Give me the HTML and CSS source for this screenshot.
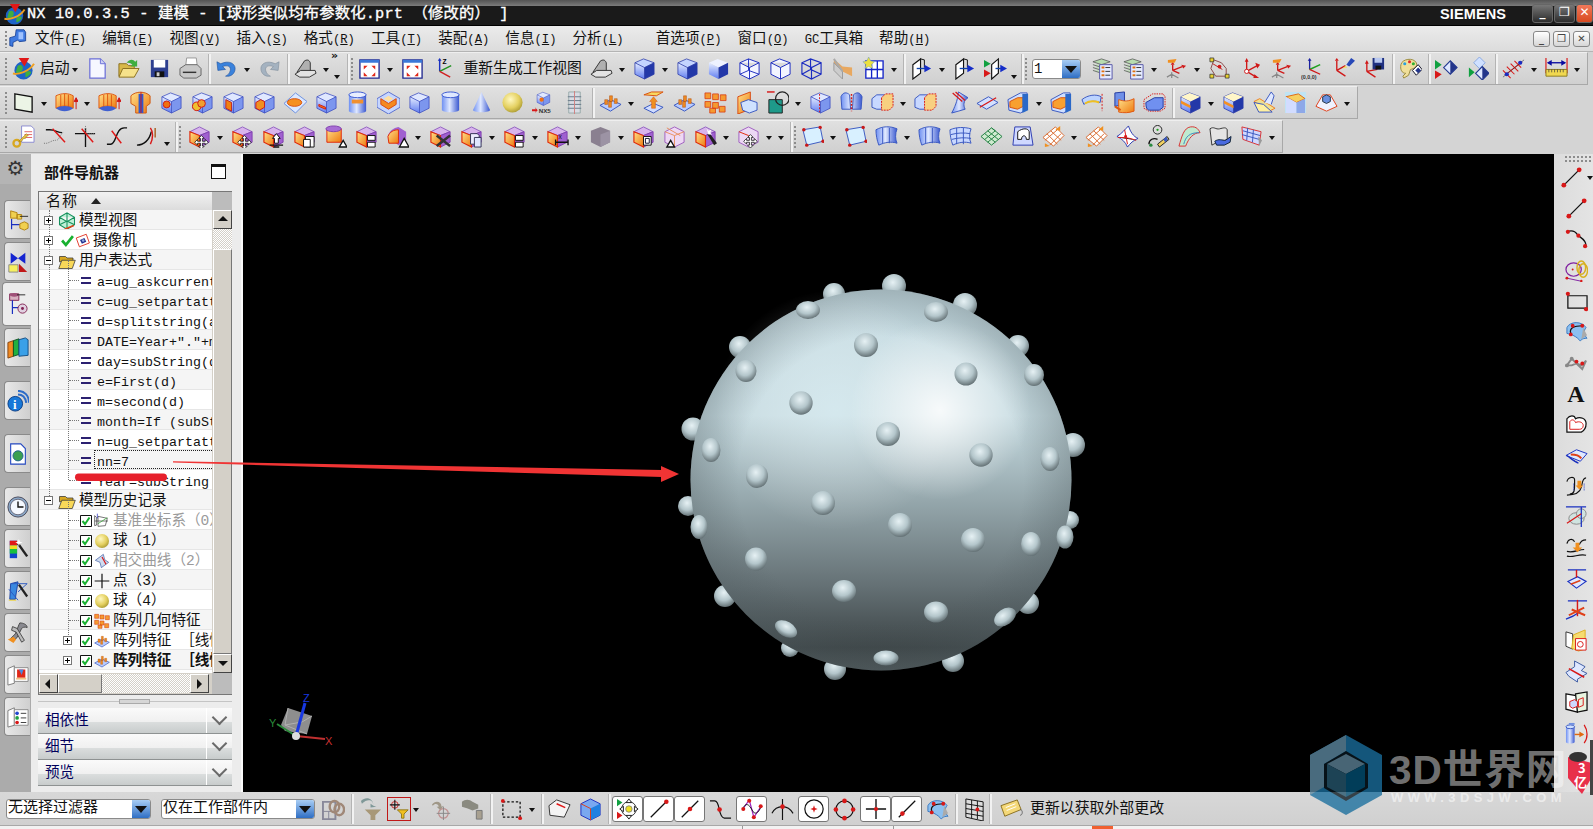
FILE: index.html
```html
<!DOCTYPE html>
<html lang="zh-CN">
<head>
<meta charset="utf-8">
<title>NX 10.0.3.5</title>
<link rel="stylesheet" href="styles.css">
</head>
<body>
<svg class="defs" aria-hidden="true">
<defs>
<linearGradient id="gb" x1="0" y1="0" x2="0" y2="1"><stop offset="0" stop-color="#e6edff"/><stop offset="1" stop-color="#5f7cf0"/></linearGradient>
<linearGradient id="go" x1="0" y1="0" x2="1" y2="1"><stop offset="0" stop-color="#ffe08a"/><stop offset="1" stop-color="#ee7a10"/></linearGradient>
<linearGradient id="gc" x1="0" y1="0" x2="1" y2="0"><stop offset="0" stop-color="#6f90f2"/><stop offset=".45" stop-color="#dfe8ff"/><stop offset="1" stop-color="#3a58d0"/></linearGradient>
<radialGradient id="gy" cx=".4" cy=".35" r=".7"><stop offset="0" stop-color="#fff8c0"/><stop offset=".6" stop-color="#e4d060"/><stop offset="1" stop-color="#a89830"/></radialGradient>
<linearGradient id="gs" x1="0" y1="0" x2="0" y2="1"><stop offset="0" stop-color="#c6dce3"/><stop offset=".33" stop-color="#c6dbe1"/><stop offset=".55" stop-color="#96a8ad"/><stop offset=".78" stop-color="#647074"/><stop offset=".94" stop-color="#3d4547"/><stop offset="1" stop-color="#4a5355"/></linearGradient>
<radialGradient id="gh1"><stop offset="0" stop-color="#fff" stop-opacity=".85"/><stop offset="1" stop-color="#fff" stop-opacity="0"/></radialGradient>
<radialGradient id="gh2"><stop offset="0" stop-color="#e8faff" stop-opacity=".42"/><stop offset="1" stop-color="#fff" stop-opacity="0"/></radialGradient>
<radialGradient id="ge"><stop offset=".75" stop-color="#505c60" stop-opacity="0"/><stop offset="1" stop-color="#505c60" stop-opacity=".32"/></radialGradient>
<radialGradient id="bp" cx=".45" cy=".35" r=".72"><stop offset="0" stop-color="#e6f1f4"/><stop offset=".5" stop-color="#b4c6cb"/><stop offset=".85" stop-color="#6f7d81"/><stop offset="1" stop-color="#505c60"/></radialGradient>

<symbol id="lg" viewBox="0 0 24 24"><circle cx="12" cy="14" r="9.5" fill="#1d63c8"/><path d="M6 9c4-2 6 1 5 4s-5 5-7 3zM14 16c3-2 6-1 6 0s-3 5-6 5z" fill="#3fae3f"/><path d="M1 17C6 19 18 15 23 7" fill="none" stroke="#f0a020" stroke-width="2"/><path d="M7 1h11l-5 9z" fill="#e01818"/></symbol>
<symbol id="br" viewBox="0 0 24 24"><path d="M9 1h10l2 3v11l-8 1-2-2-6 3v5l-4-1V11l7-2z" fill="#3f7ae0" stroke="#123a90"/><path d="M12 4h6v9h-6z" fill="#9fc2ff"/></symbol>
<symbol id="dc" viewBox="0 0 24 24"><path d="M4 2h11l5 5v15H4z" fill="#f6f7ff" stroke="#6c70d8" stroke-width="1.3"/><path d="M15 2v5h5" fill="#ced2f4" stroke="#6c70d8"/></symbol>
<symbol id="fo" viewBox="0 0 24 24"><path d="M2 20V7h8l2 2h6v11z" fill="#d8b848" stroke="#8a7020"/><path d="M2 21l4-9h17l-5 9z" fill="#f6e28a" stroke="#8a7020"/><path d="M10 6c3-4 7-4 9-1l2-2v7h-7l2-2c-2-2-4-2-6-2z" fill="#3fae3f"/></symbol>
<symbol id="sv" viewBox="0 0 24 24"><path d="M3 3h18v18H3z" fill="#2d3f90"/><path d="M6 3h12v8H6z" fill="#fff"/><path d="M7 15h10v6H7z" fill="#111"/><path d="M9 16h3v4H9z" fill="#ccc"/></symbol>
<symbol id="pr" viewBox="0 0 24 24"><path d="M8 1h10l1 8H7z" fill="#fff" stroke="#999"/><path d="M1 12l6-4h12l4 4v7l-5 3H5l-4-3z" fill="#c8c8c8" stroke="#666"/><path d="M4 16h14" stroke="#333" stroke-width="1.5"/></symbol>
<symbol id="un" viewBox="0 0 24 24"><path d="M2 5l1 9 8-1-3-3c5-2 9 0 8 4s-3 5-5 6c6 1 10-3 10-8S15 3 6 7z" fill="#3a82dc" stroke="#1d4f9a" stroke-width=".6"/></symbol>
<symbol id="re" viewBox="0 0 24 24"><path d="M22 5l-1 9-8-1 3-3c-5-2-9 0-8 4s3 5 5 6c-6 1-10-3-10-8S9 3 18 7z" fill="#a4b2c0" stroke="#7c8a98" stroke-width=".6"/></symbol>
<symbol id="bk" viewBox="0 0 24 24"><path d="M3 16 11 4c4-2 5 0 6 2v9z" fill="#b0b0b0" stroke="#333"/><path d="M1 18l6-4h15l1 3-7 4H6z" fill="#e2e2e2" stroke="#333"/></symbol>
<symbol id="ft" viewBox="0 0 24 24"><path d="M2 3h20v19H2z" fill="#fff" stroke="#222a90" stroke-width="1.4"/><path d="M2 3h20v3H2z" fill="#3a78d8"/><path d="M6 9h4l-4 4zM18 9h-4l4 4zM6 20h4l-4-4zM18 20h-4l4-4z" fill="#e02818"/></symbol>
<symbol id="wc" viewBox="0 0 24 24"><path d="M8 15V3" stroke="#1a30c0" stroke-width="1.5"/><path d="M8 15 20 9" stroke="#209020" stroke-width="1.5"/><path d="M8 15l11 6" stroke="#d02020" stroke-width="1.5"/><path d="M6 4l2-3 2 3z" fill="#1a30c0"/><text x="11" y="7" font-size="7" font-family="Liberation Sans" font-weight="700">Z</text></symbol>
<symbol id="c1" viewBox="0 0 24 24"><path d="M2 6 11 2l11 4-10 5z" fill="#c4d4ff"/><path d="M2 6l10 5v12L2 18z" fill="url(#gb)"/><path d="M12 11 22 6v12l-10 5z" fill="#2338a8"/><path d="M2 6 11 2l11 4v12l-10 5-10-5zM2 6l10 5 10-5M12 11v12" fill="none" stroke="#2a3aa8" stroke-width=".8"/></symbol>
<symbol id="c2" viewBox="0 0 24 24"><path d="M2 6 11 2l11 4-10 5z" fill="#e0e8ff"/><path d="M2 6l10 5v12L2 18z" fill="url(#gb)"/><path d="M12 11 22 6v12l-10 5z" fill="#7c96ee"/><path d="M2 6 11 2l11 4v12l-10 5-10-5zM2 6l10 5 10-5M12 11v12" fill="none" stroke="#3a4ac0" stroke-width=".8"/></symbol>
<symbol id="c3" viewBox="0 0 24 24"><path d="M2 6 11 2l11 4-10 5z" fill="#eef2ff"/><path d="M2 6l10 5v12L2 18z" fill="url(#gb)"/><path d="M12 11 22 6v12l-10 5z" fill="#2338a8"/></symbol>
<symbol id="w1" viewBox="0 0 24 24"><path d="M2 6 11 2l11 4v12l-10 5-10-5zM2 6l10 5 10-5M12 11v12M2 18l9-4 11 4M11 2v12" fill="#f2f4ff" stroke="#1c2cc0"/></symbol>
<symbol id="w2" viewBox="0 0 24 24"><path d="M2 6 11 2l11 4v12l-10 5-10-5zM2 6l10 5 10-5M12 11v12" fill="#f2f4ff" stroke="#1c2cc0"/></symbol>
<symbol id="w3" viewBox="0 0 24 24"><path d="M2 6 11 2l11 4v12l-10 5-10-5zM2 6l10 5 10-5M12 11v12M2 18l9-5 11 5M11 2v11" fill="none" stroke="#1c2cc0" stroke-width="1.2"/></symbol>
<symbol id="ct" viewBox="0 0 24 24"><path d="M3 2 12 10l10 1v9L12 15 3 6z" fill="#e8a860"/><path d="M3 6l9 9v8L3 14z" fill="#ccc" stroke="#999"/><path d="M3 2l9 13" stroke="#aaa" stroke-width="2"/></symbol>
<symbol id="gr" viewBox="0 0 24 24"><path d="M4 4h18v18H4zM10 4v18M16 4v18M4 13h18" fill="#fff" stroke="#1424c8" stroke-width="1.4"/><path d="M7 0l2 4 4 1-3 3 1 4-4-2-4 2 1-4-3-3 4-1z" fill="#ece040" stroke="#6a9ac0" stroke-width=".5"/></symbol>
<symbol id="pa" viewBox="0 0 24 24"><path d="M3 8l8-6v15l-8 6z" fill="#fff" stroke="#111" stroke-width="1.2"/><path d="M11 2l4 1v8" fill="none" stroke="#111"/><path d="M7 12h9" stroke="#14a" stroke-width="1.4"/><path d="M15 8l7 4-7 4z" fill="#142cc8"/></symbol>
<symbol id="pb" viewBox="0 0 24 24"><path d="M8 8l7-6v15l-7 6z" fill="#fff" stroke="#111" stroke-width="1.2"/><path d="M12 12h6" stroke="#14a" stroke-width="1.4"/><path d="M17 8l7 4-7 4z" fill="#142cc8"/><path d="M0 3l7 4-7 4z" fill="#10a040"/><path d="M0 13l7 4-7 4z" fill="#d81818"/></symbol>
<symbol id="la" viewBox="0 0 24 24"><path d="M2 5l9-3 9 3-9 3zM2 8l9 3 9-3M2 11l9 3 9-3M2 14l9 3 9-3" fill="#b8dcb0" stroke="#555" stroke-width=".8"/><path d="M9 8h13v15H9z" fill="#e6ecff" stroke="#5656a8"/><path d="M11 11h3M11 15h3M11 19h3" stroke="#e07010" stroke-width="2"/><path d="M15 11h5M15 15h5M15 19h5" stroke="#333"/></symbol>
<symbol id="cs" viewBox="0 0 24 24"><path d="M8 14V8M8 14l10-4M8 14l7 3" stroke="#d01818" stroke-width="1.4"/><path d="M6 8l2-3 2 3zM17 8l5 1-3 3z" fill="#d01818"/><path d="M3 3l9-1-2 4H3z" fill="#f09020"/><path d="M7 16v6M7 18l-5 3M7 18l7 4" stroke="#888" stroke-width="1.3"/></symbol>
<symbol id="cq" viewBox="0 0 24 24"><path d="M4 3h2M6 3l8 3 5 6v8H8L3 12z" fill="none" stroke="#8a4a4a"/><path d="M5 7l10 6" stroke="#c02020"/><g fill="#e8d030" stroke="#222" stroke-width=".7"><path d="M2 1h4v4H2zM18 18h4v4h-4zM2 18h4v4H2z"/></g><circle cx="12" cy="10" r="2" fill="#d01818"/></symbol>
<symbol id="cp" viewBox="0 0 24 24"><path d="M8 15V4M8 15l11-6M8 15l10 6" stroke="#d01818" stroke-width="1.4"/><path d="M6 5l2-4 2 4zM17 6l5 2-3 4zM16 18l5 4-6 0z" fill="#d01818"/><circle cx="8" cy="15" r="2.2" fill="#fff" stroke="#d01818"/></symbol>
<symbol id="co" viewBox="0 0 24 24"><path d="M9 13V3" stroke="#1a20a0" stroke-width="1.4"/><path d="M9 13l11-5" stroke="#20a020" stroke-width="1.6"/><path d="M9 13l11 5" stroke="#d01818" stroke-width="1.4"/><path d="M7 4l2-3 2 3z" fill="#1a20a0"/><text x="0" y="23" font-size="5.6" font-weight="700" font-family="Liberation Sans" fill="#333">(0,0,0)</text></symbol>
<symbol id="cl" viewBox="0 0 24 24"><path d="M5 14V4M5 14l9-5M5 14l9 6" stroke="#d01818" stroke-width="1.4"/><path d="M3 4l2-3 2 3z" fill="#d01818"/><path d="M15 8l5-7 4 3-6 6z" fill="#2848b8"/><path d="M11 12l3-3 2 2z" fill="#f0e060"/></symbol>
<symbol id="cf" viewBox="0 0 24 24"><path d="M4 15V6M4 15l11-2M4 15l9 6" stroke="#d01818" stroke-width="1.4"/><path d="M2 7l2-4 2 4z" fill="#d01818"/><path d="M10 1h12v12H10z" fill="#1f3080"/><path d="M12 1h8v5h-8z" fill="#b8c8f0"/><path d="M13 9h6v4h-6z" fill="#111"/></symbol>
<symbol id="pal" viewBox="0 0 24 24"><path d="M2 8c1-6 13-8 16-2 2 4-2 6-6 7l-2 6-5 3-1-2 3-3c-4 0-6-4-5-9z" fill="#f0df9a" stroke="#9a8a40"/><circle cx="6" cy="7" r="1.6" fill="#28a0e0"/><circle cx="11" cy="5" r="1.6" fill="#e02828"/><circle cx="15" cy="7" r="1.6" fill="#30b030"/><path d="M14 14l6-6 4 5-6 6z" fill="#fff" stroke="#112"/><path d="M17 14l3-3 3 3-3 3z" fill="#23358a"/></symbol>
<symbol id="vw" viewBox="0 0 24 24"><path d="M0 3l7 5-7 5z" fill="#10a040"/><path d="M0 14l7 4-7 5z" fill="#d81818"/><path d="M9 11l7-7 7 7-7 7z" fill="#dfe8ff" stroke="#243a90" stroke-width="1.2"/><path d="M16 4v14l7-7z" fill="#23358a"/></symbol>
<symbol id="vv" viewBox="0 0 24 24"><path d="M8 6l6-6 6 6-6 6z" fill="#cfe0ff" stroke="#8aa8e0"/><path d="M3 11l6 5-6 5z" fill="#10a040"/><path d="M10 17l7-7 7 7-7 7z" fill="#dfe8ff" stroke="#243a90" stroke-width="1.2"/><path d="M17 10v14l7-7z" fill="#23358a"/></symbol>
<symbol id="dt" viewBox="0 0 24 24"><path d="M3 19 21 5M1 14l8 8M5 10l8 8M9 7l8 8M13 4l7 7" stroke="#d81818" stroke-width="1.1"/><path d="M1 21 23 3" stroke="#333" stroke-width=".6"/><circle cx="5" cy="18" r="2.2" fill="#1a2cc0"/><circle cx="19" cy="6" r="2.2" fill="#1a2cc0"/></symbol>
<symbol id="ru" viewBox="0 0 24 24"><path d="M3 6h18" stroke="#0a0aa0" stroke-width="1.4"/><path d="M1 1v16M23 1v16" stroke="#d81818" stroke-width="1.2"/><path d="M2 6l5-3v6zM22 6l-5-3v6z" fill="#0a0aa0"/><path d="M1 13h22v7H1z" fill="#f0d850" stroke="#8a7a20"/><path d="M4 13v3M7 13v3M10 13v3M13 13v3M16 13v3M19 13v3" stroke="#333" stroke-width=".7"/></symbol>

<symbol id="rc" viewBox="0 0 24 24"><path d="M3 3l18 3v16L3 19z" fill="#ecf4e6" stroke="#111" stroke-width="1.4"/></symbol>
<symbol id="ex" viewBox="0 0 24 24"><path d="M1 5c6-3 13-3 18 0v13c-5-3-13-3-18 0z" fill="url(#go)" stroke="#e05810"/><path d="M6 4v13M10 3v13M14 4v13" stroke="#e05810"/><path d="M1 18c5 4 13 4 18 0-5-3-13-3-18 0z" fill="#4060d0"/><path d="M22 8v11M20 11l2-4 2 4z" stroke="#d01818" fill="#d01818"/></symbol>
<symbol id="sh" viewBox="0 0 24 24"><path d="M2 5c5-5 15-5 20 0v8l-4 3v7H7v-7l-5-3z" fill="url(#go)" stroke="#d05810"/><path d="M10 3v20h5V3z" fill="#3058d0"/><path d="M12.500 1v22" stroke="#d01818"/></symbol>
<symbol id="h1" viewBox="0 0 24 24"><use href="#c2"/><circle cx="7" cy="14" r="3.6" fill="#f07010" stroke="#d01818"/></symbol>
<symbol id="h2" viewBox="0 0 24 24"><use href="#c2"/><circle cx="6" cy="16" r="4.500" fill="#f0c030" stroke="#d01818"/><circle cx="11" cy="13" r="4" fill="#f0a030" stroke="#d01818"/></symbol>
<symbol id="h3" viewBox="0 0 24 24"><use href="#c2"/><path d="M4 9l6 3v9l-6-3z" fill="#f08010" stroke="#c02020"/></symbol>
<symbol id="h4" viewBox="0 0 24 24"><use href="#c2"/><path d="M3 12l5-3 4 2v6l-5 3-4-2z" fill="#f09020" stroke="#d01818"/></symbol>
<symbol id="ds" viewBox="0 0 24 24"><path d="M12 2 24 11 12 23 0 13z" fill="#dce8ff" stroke="#6c90e0"/><ellipse cx="11" cy="12" rx="7.500" ry="4" fill="#f59020" stroke="#d85010"/></symbol>
<symbol id="h5" viewBox="0 0 24 24"><use href="#c2"/><path d="M4 14l7 3v2l-7-3z" fill="#f08010" stroke="#d01818"/></symbol>
<symbol id="cy" viewBox="0 0 24 24"><path d="M3 4h18v17c-3 3-15 3-18 0z" fill="url(#gc)"/><ellipse cx="12" cy="4" rx="9" ry="3" fill="#e8eeff" stroke="#3a58d0"/><path d="M6 9h12v4H6z" fill="#f09030"/></symbol>
<symbol id="sl" viewBox="0 0 24 24"><path d="M12 1 24 8v9l-12 7L0 17V8z" fill="#c6d6ff" stroke="#5a70d0"/><path d="M4 8l8 5 8-5v6l-8 5-8-5z" fill="#f58a20" stroke="#d84810"/><path d="M7 8l5-3 5 3-5 3z" fill="#ffe0a0"/></symbol>
<symbol id="cc" viewBox="0 0 24 24"><path d="M3 4h18v16c-3 3-15 3-18 0z" fill="url(#gc)"/><ellipse cx="12" cy="4" rx="9" ry="3" fill="#dfe8ff" stroke="#3a58d0"/></symbol>
<symbol id="cn" viewBox="0 0 24 24"><path d="M12 1 21 20c-3 3-15 3-18 0z" fill="url(#gc)"/></symbol>
<symbol id="sp" viewBox="0 0 24 24"><circle cx="12" cy="12" r="10.500" fill="url(#gy)"/></symbol>
<symbol id="nx" viewBox="0 0 24 24"><use href="#c2" transform="translate(4 0) scale(.66)"/><circle cx="10" cy="9" r="2.2" fill="#f07010"/><path d="M0 19h4l-1-2 3 3-3 3 1-2H0z" fill="#d81818"/><text x="7" y="23" font-size="6.500" font-weight="700" font-family="Liberation Sans" fill="#333">NX5</text></symbol>
<symbol id="th" viewBox="0 0 24 24"><path d="M6 1h12v22H6z" fill="#d8dce4" stroke="#9aa"/><path d="M5 6h14M5 10h14M5 14h14M5 18h14" stroke="#6a7a8a"/><path d="M12 0v24" stroke="#d08080"/></symbol>
<symbol id="pt" viewBox="0 0 24 24"><path d="M1 15 12 9l11 5-11 7z" fill="#b8ccff" stroke="#3a58c0"/><g fill="#f08a20" stroke="#b05010" stroke-width=".5"><path d="M6 9h3v5H6zM11 5h3v6h-3zM16 8h3v5h-3zM10 11h3v6h-3z"/></g></symbol>
<symbol id="up" viewBox="0 0 24 24"><path d="M2 4l8-3h12l-7 4z" fill="#f8d860" stroke="#d85010"/><path d="M2 18l10-5 10 4-10 6z" fill="#cfdcff" stroke="#3a58c0"/><path d="M12 6l4 5h-2v7h-4v-7H8z" fill="#f09020" stroke="#d85010" stroke-width=".5"/></symbol>
<symbol id="bo" viewBox="0 0 24 24"><g fill="#f59a30" stroke="#d83810" stroke-width=".8"><path d="M1 2h6v6H1zM9 3h6v6H9zM17 4h6v6h-6zM1 11h6v6H1zM9 12h6v6H9zM16 16h6v6h-6zM6 18h6v5H6z"/></g></symbol>
<symbol id="mr" viewBox="0 0 24 24"><path d="M3 6l13-5v18L3 24z" fill="url(#go)" stroke="#d84810"/><path d="M6 12l8-3 9 3v8l-8 3-7-3z" fill="#cfe2ff" stroke="#3a58c0"/></symbol>
<symbol id="tc" viewBox="0 0 24 24"><path d="M1 1h8" stroke="#d81818" stroke-width="1.5"/><path d="M3 9h14v14H3z" fill="#1e9a8a" stroke="#222"/><circle cx="17" cy="8" r="7" fill="none" stroke="#222" stroke-width="1.3"/></symbol>
<symbol id="e1" viewBox="0 0 24 24"><use href="#c2"/><path d="M11 3v19" stroke="#d81818" stroke-dasharray="2 1.500"/></symbol>
<symbol id="e2" viewBox="0 0 24 24"><path d="M1 6c2-5 6-5 9-2l1 15H2zM23 6c-2-5-6-5-9-2l-1 15h9z" fill="url(#gc)" stroke="#3a58c0"/><path d="M12 3v18" stroke="#d81818" stroke-dasharray="2 1.500" stroke-width="1.500"/></symbol>
<symbol id="e3" viewBox="0 0 24 24"><path d="M1 8l5-4h8v15H6l-5-2z" fill="#c8d8ff" stroke="#3a58c0"/><path d="M11 7l4-4h8v13l-4 4h-8z" fill="#f8d080" stroke="#d81818" stroke-dasharray="2 1"/></symbol>
<symbol id="e4" viewBox="0 0 24 24"><path d="M14 1l10 6c-5 3-5 8-3 12l-14 4c3-6 6-12 7-22z" fill="url(#gc)" stroke="#3a58c0"/><path d="M8 2l10 9M11 1l10 9" stroke="#d81818" stroke-width="1.300"/></symbol>
<symbol id="e5" viewBox="0 0 24 24"><path d="M1 13 13 6l10 6-12 7z" fill="#d4e0ff" stroke="#3a58c0"/><path d="M4 17 21 7" stroke="#d81818" stroke-width="1.400"/></symbol>
<symbol id="e6" viewBox="0 0 24 24"><path d="M1 9l13-7h7v17l-7 4-12-3z" fill="#cfe0ff" stroke="#3a58c0"/><path d="M3 11l8-4h6v9l-6 3-8-2z" fill="#f8a030" stroke="#d85010"/><path d="M16 3h6v17l-6 3z" fill="#2a68c8"/></symbol>
<symbol id="b1" viewBox="0 0 24 24"><path d="M1 9c6-5 15-6 20-3l-1 6c-5-2-12-2-17 2z" fill="#bcd4ff" stroke="#3a58c0"/><path d="M4 13c5-3 10-3 15-1" stroke="#f0c020" stroke-width="2" fill="none"/><path d="M22 3v18" stroke="#d81818" stroke-dasharray="2 1.500"/></symbol>
<symbol id="b2" viewBox="0 0 24 24"><path d="M3 2l10-1v13L3 16z" fill="#6f90e8" stroke="#223aa0"/><path d="M7 9c6 2 10 2 16-1v13c-6 2-10 2-16 1z" fill="url(#go)" stroke="#e05810"/><path d="M3 16l6 4" stroke="#e05810" stroke-width="2"/></symbol>
<symbol id="b3" viewBox="0 0 24 24"><path d="M1 9l9-6h11l2 3v12l-5 3H6l-5-3z" fill="none" stroke="#d81818" stroke-dasharray="1.500 1"/><path d="M3 12l9-5h9v10l-4 3H7c-3 0-4-3-4-8z" fill="#7090f0" stroke="#223aa0"/></symbol>
<symbol id="f1" viewBox="0 0 24 24"><use href="#c1"/><path d="M2 6 11 2l11 4-10 5z" fill="#fff6c8"/><path d="M2 10l10 5v3L2 13z" fill="#f59020"/></symbol>
<symbol id="f2" viewBox="0 0 24 24"><path d="M1 11 17 21l6-3-16-10z" fill="#f0e090" stroke="#f08020"/><path d="M12 12l7-11 3 4-3 9" fill="#dfe8ff" stroke="#3a58c0"/><path d="M1 12l5 10h14l-9-8z" fill="#fff0a0" stroke="#3a58c0"/></symbol>
<symbol id="f3" viewBox="0 0 24 24"><path d="M1 1h22v22H1z" fill="#bfe4f4"/><path d="M2 6l13-3 7 5-9 4z" fill="#f6d060" stroke="#e06810"/><path d="M2 6l11 6v11H2z" fill="#d2dcff"/><path d="M13 12l9-4v15h-9z" fill="#8ea8e8"/></symbol>
<symbol id="f4" viewBox="0 0 24 24"><path d="M1 16 8 4h8l7 12-11 5z" fill="#eef2ff" stroke="#e04018"/><path d="M8 6l4-2 4 2v5l-4 2-4-2z" fill="#6a90e0" stroke="#234"/></symbol>

<symbol id="ky" viewBox="0 0 24 24"><path d="M10 1h10l3 3v14H10z" fill="#fff" stroke="#8a8ad0"/><path d="M13 7h8M13 10h8M13 13h8" stroke="#e06060"/><circle cx="5" cy="19" r="3.500" fill="none" stroke="#d8a820" stroke-width="2.400"/><path d="M7 17l8-8 2 2-2 1-1 2-2 0-2 3z" fill="#e8c040" stroke="#8a7010" stroke-width=".5"/></symbol>
<symbol id="t1" viewBox="0 0 24 24"><path d="M3 5h4c6 0 8 3 13 3" fill="none" stroke="#111" stroke-width="1.400"/><path d="M1 19c5 1 7-3 12-3s3-5 8-8" fill="none" stroke="#777" stroke-dasharray="1 1"/><path d="M10 4l13 14" stroke="#e01818" stroke-width="1.500"/></symbol>
<symbol id="t2" viewBox="0 0 24 24"><path d="M1 9h21M12 3v20" stroke="#111" stroke-width="1.400"/><path d="M12 1v8M12 9h10" stroke="#777" stroke-dasharray="1 1"/><path d="M8 4l12 14" stroke="#e01818" stroke-width="1.500"/></symbol>
<symbol id="t3" viewBox="0 0 24 24"><path d="M2 20h4c6 0 5-17 14-17h3" fill="none" stroke="#111" stroke-width="1.500"/><path d="M7 6l10 13" stroke="#e01818" stroke-width="1.500"/></symbol>
<symbol id="t4" viewBox="0 0 24 24"><path d="M1 21c7 0 13-5 15-14" fill="none" stroke="#111" stroke-width="1.500"/><path d="M15 3c3 4 3 11 0 17" fill="none" stroke="#d81818" stroke-width="1.500"/><path d="M20 3v10" stroke="#a86020" stroke-width="1.500"/></symbol>
<symbol id="qb" viewBox="0 0 24 24"><path d="M2 7l10-5 10 5-10 4z" fill="#d8b4ec" stroke="#9060c0"/><path d="M12 11 22 7v11l-10 5z" fill="#a060d0" stroke="#8040b0"/><path d="M2 7l10 4v12L2 18z" fill="url(#go)" stroke="#e02808" stroke-width="1.200"/></symbol>
<symbol id="q1" viewBox="0 0 24 24"><use href="#qb"/><path d="M14 11l3 3h-2v3h3v-2l3 3-3 3v-2h-3v3h2l-3 3-3-3h2v-3h-3v2l-3-3 3-3v2h3v-3h-2z" fill="#fff" stroke="#111" stroke-width=".8"/></symbol>
<symbol id="q2" viewBox="0 0 24 24"><use href="#qb"/><path d="M15 9l4 5h-2v5h-4v-5h-2z" fill="#fff" stroke="#111"/><path d="M8 21h14M12 23h6" stroke="#111" stroke-width="1.400"/></symbol>
<symbol id="q3" viewBox="0 0 24 24"><use href="#qb"/><path d="M13 12h9v11H13z" fill="#fff" stroke="#111"/><path d="M11 15h7v8h-7z" fill="#fff" stroke="#111"/></symbol>
<symbol id="q4" viewBox="0 0 24 24"><path d="M3 4h15v14H3z" fill="url(#go)" stroke="#e02808"/><ellipse cx="10" cy="4" rx="8" ry="3" fill="#a86cd4" stroke="#8040b0"/><path d="M16 23l4-7 4 7z" fill="#fff" stroke="#111" stroke-width="1.400"/></symbol>
<symbol id="q5" viewBox="0 0 24 24"><use href="#qb"/><path d="M13 11h8v5h-8zM13 18h8v5h-8z" fill="#fff" stroke="#111"/></symbol>
<symbol id="q6" viewBox="0 0 24 24"><path d="M2 12c1-6 6-9 11-10l8 5v9l-8 5z" fill="#a060d0"/><path d="M2 12c2-5 6-7 11-7v14H3z" fill="url(#go)" stroke="#e02808"/><path d="M14 23l5-9 5 9z" fill="#fff" stroke="#111" stroke-width="1.400"/></symbol>
<symbol id="q7" viewBox="0 0 24 24"><use href="#qb"/><path d="M8 11l14 11M22 11 8 22" stroke="#333" stroke-width="2.600"/></symbol>
<symbol id="q8" viewBox="0 0 24 24"><use href="#qb"/><path d="M11 9h7l2 2v9h-9z" fill="#eef" stroke="#335"/><path d="M15 13h7v10h-7z" fill="#dfe6ff" stroke="#335"/></symbol>
<symbol id="q9" viewBox="0 0 24 24"><use href="#qb"/><path d="M10 18h13M10 15v6M23 15v6" stroke="#111" stroke-width="1.400"/><text x="13" y="15" font-size="7" font-family="Liberation Sans" fill="#111">x</text></symbol>
<symbol id="qg" viewBox="0 0 24 24"><path d="M2 6l10-4 10 4v12l-10 5-10-5z" fill="#8a8090"/><path d="M12 10 22 6v12l-10 5z" fill="#9c93a4"/></symbol>
<symbol id="qa" viewBox="0 0 24 24"><use href="#qb"/><path d="M12 12h8v9h-8z" fill="#fff" stroke="#111"/><path d="M14 14h4v5h-4z" fill="none" stroke="#113"/></symbol>
<symbol id="qc" viewBox="0 0 24 24"><path d="M2 7l10-5 10 5v11l-10 5-10-5z" fill="#eed8f4" stroke="#a060c0"/><path d="M2 7l10 4 10-4M12 11v12M4 3l14 8" fill="none" stroke="#e89060"/><path d="M4 23l4-7 4 7z" fill="#fff" stroke="#111" stroke-width="1.400"/></symbol>
<symbol id="qd" viewBox="0 0 24 24"><use href="#qb"/><path d="M16 8l8 11-3 2-7-11z" fill="#222"/><path d="M13 3l2 3 3-1-1 3 2 2-4 0z" fill="#fff"/></symbol>
<symbol id="qe" viewBox="0 0 24 24"><path d="M2 7l10-5 10 5v11l-10 5-10-5z" fill="#ecd8f4" stroke="#a060c0"/><path d="M2 7l10 4v2" stroke="#e02808" fill="none"/><path d="M14 10l3 3h-2v3h3v-2l3 3-3 3v-2h-3v3h2l-3 3-3-3h2v-3h-3v2l-3-3 3-3v2h3v-3h-2z" fill="#fff" stroke="#111" stroke-width=".8"/></symbol>

<symbol id="s1" viewBox="0 0 24 24"><path d="M2 5l18-3 3 15-17 4z" fill="#d8f0ff" stroke="#3a58c0"/><circle cx="3" cy="5" r="1.800" fill="#c81818"/><circle cx="20" cy="2.500" r="1.800" fill="#c81818"/><circle cx="23" cy="17" r="1.800" fill="#c81818"/><circle cx="6" cy="21" r="1.800" fill="#c81818"/></symbol>
<symbol id="s2" viewBox="0 0 24 24"><path d="M1 5c7-4 15-4 22-1-2 5-2 11 0 15-6-2-13-1-19 2C2 16 1 10 1 5z" fill="url(#gc)" stroke="#3a58c0"/><path d="M8 3v16M15 3v16" stroke="#3a58c0"/></symbol>
<symbol id="s3" viewBox="0 0 24 24"><path d="M1 5c7-3 15-3 22-1-2 5-2 11 0 15-6-2-13-1-19 2C2 16 1 10 1 5zM8 3v17M15 3v17M2 10c7-2 14-2 20-1M3 15c7-2 14-2 20-1" fill="#c8d8ff" stroke="#3a58c0"/></symbol>
<symbol id="s4" viewBox="0 0 24 24"><path d="M1 12 12 3l11 9-11 9zM5 9l11 9M8 6l11 9M12 3l4 3M16 6 5 15M19 9 8 18" fill="#d0ead0" stroke="#1e8040"/></symbol>
<symbol id="s5" viewBox="0 0 24 24"><path d="M4 2h16l3 19H2z" fill="#cfd8ff" stroke="#2c3cb0"/><path d="M7 7c5-4 11-4 12 0v8h-3c0-5-5-5-5 0H7z" fill="#fff" stroke="#111"/></symbol>
<symbol id="s6" viewBox="0 0 24 24"><path d="M1 13 14 2l9 9-11 11zM5 9l11 11M9 6l11 10M3 16 16 5M8 21 20 9" fill="#fff" stroke="#d86a30"/><path d="M14 5l5-4v5zM3 19l5 3-5 1z" fill="#f09020"/></symbol>
<symbol id="s7" viewBox="0 0 24 24"><path d="M1 12C6 9 10 4 13 1c2 6 5 11 10 13-5 2-8 5-11 9-2-5-6-9-11-11z" fill="#fff" stroke="#2a3ab0"/><path d="M9 5c1 5 2 10 3 15M2 13c5 0 12 0 19 3" stroke="#d81818"/><circle cx="10" cy="12" r="1.500" fill="#d81818"/></symbol>
<symbol id="s8" viewBox="0 0 24 24"><circle cx="11" cy="5" r="4.500" fill="none" stroke="#222"/><circle cx="11" cy="5" r="1.200" fill="#20a020"/><path d="M2 20c0-5 5-7 9-5" fill="none" stroke="#111" stroke-width="1.400"/><circle cx="4" cy="21" r="1.800" fill="#2a8a40"/><path d="M11 20l10-8 2 3-10 8z" fill="#f0d060" stroke="#222"/><path d="M17 15l3-3 2 3-3 3z" fill="#3a58c0"/></symbol>
<symbol id="s9" viewBox="0 0 24 24"><path d="M1 22C4 12 6 3 13 2s9 4 10 6c-7 0-12 6-15 14z" fill="#bfead0" stroke="#d83030"/><path d="M6 20C8 12 12 8 22 8" stroke="#3a8ac0" fill="none"/></symbol>
<symbol id="sa" viewBox="0 0 24 24"><path d="M1 4c4-3 6 1 10 0s7-2 8 1v9l-3 3c-4-2-7 1-13 4z" fill="#e4e4e4" stroke="#333"/><path d="M6 17c4-3 8-1 11-1l6-4-1 6-6 3H8z" fill="#4a6ae0" stroke="#123"/></symbol>
<symbol id="sb" viewBox="0 0 24 24"><path d="M2 2l20 5-2 14L3 15z" fill="#d0d8ff" stroke="#d83030"/><path d="M3 6l18 5M2 10l18 5M8 3 7 16M14 5l-1 13" stroke="#3a58c0"/><path d="M19 12l4 4-3 6z" fill="#999"/></symbol>

<symbol id="pl" viewBox="0 0 24 24"><path d="M3 21 21 3" stroke="#111" stroke-width="1.300"/><circle cx="4" cy="20" r="2.500" fill="#d81818"/><circle cx="20" cy="4" r="2.500" fill="#d81818"/></symbol>
<symbol id="pe" viewBox="0 0 24 24"><path d="M3 21 21 3" stroke="#111" stroke-width="1.300"/><circle cx="20" cy="4" r="2.500" fill="#d81818"/></symbol>
<symbol id="pm" viewBox="0 0 24 24"><path d="M3 21 21 3" stroke="#111" stroke-width="1.300"/><circle cx="12" cy="12" r="2.500" fill="#d81818"/></symbol>
<symbol id="pq" viewBox="0 0 24 24"><path d="M3 21 21 3" stroke="#111" stroke-width="1.300"/><circle cx="7" cy="17" r="2.500" fill="#d81818"/></symbol>
<symbol id="pc" viewBox="0 0 24 24"><path d="M2 4c5-2 9 0 11 3s9 4 9 12" fill="none" stroke="#111" stroke-width="1.300"/><circle cx="3" cy="4" r="2.200" fill="#d81818"/><circle cx="14" cy="8" r="2.200" fill="#d81818"/><circle cx="21" cy="19" r="2.200" fill="#d81818"/></symbol>
<symbol id="pr2" viewBox="0 0 24 24"><path d="M3 6h20v13H3z" fill="none" stroke="#111" stroke-width="1.300"/><circle cx="3" cy="4" r="2.200" fill="#d81818"/><circle cx="22" cy="20" r="2.200" fill="#d81818"/></symbol>
<symbol id="px" viewBox="0 0 24 24"><path d="M2 8c3-7 16-7 20 0-3 3-2 8 1 11-6 0-7 3-7 3C12 17 7 15 2 14z" fill="#8cc0f0" stroke="#3a78c0"/><path d="M19 8l4 8-6 4z" fill="#aaa"/><path d="M6 14C4 8 10 6 18 6" fill="none" stroke="#111" stroke-width="1.300"/><circle cx="6" cy="15" r="2" fill="#d81818"/><circle cx="18" cy="6" r="2" fill="#d81818"/><circle cx="8" cy="6" r="2" fill="#d81818"/></symbol>
<symbol id="rn" viewBox="0 0 24 24"><ellipse cx="9" cy="11" rx="8" ry="7" fill="none" stroke="#8020a0" stroke-width="1.300"/><ellipse cx="17" cy="9" rx="4.500" ry="7" fill="none" stroke="#d8b020" stroke-width="1.500"/><ellipse cx="19" cy="12" rx="4.500" ry="7" fill="none" stroke="#d8b020" stroke-width="1.500"/><circle cx="8" cy="11" r="1" fill="#d81818"/><path d="M2 20l14 3" stroke="#8020a0"/><circle cx="2" cy="20" r="1.500" fill="#d81818"/><circle cx="17" cy="23" r="1.300" fill="#d81818"/></symbol>
<symbol id="pg" viewBox="0 0 24 24"><path d="M2 15 7 8l5 5 5 2 5-5-4 9-6-6-5 2z" fill="none" stroke="#888" stroke-width="2"/><circle cx="7" cy="8" r="2" fill="#888"/><circle cx="12" cy="11" r="2" fill="#d81818"/><circle cx="18" cy="13" r="2" fill="#d81818"/><circle cx="2" cy="15" r="2" fill="#888"/></symbol>
<symbol id="ht" viewBox="0 0 24 24"><path d="M2 6c3-4 8-4 9 0 5-3 11 0 11 5s-3 8-5 9H2z" fill="#fff" stroke="#111" stroke-width="1.300"/><path d="M5 9c2-3 5-2 6 1 4-2 8 0 8 3s-2 4-4 4H5z" fill="none" stroke="#d81818"/></symbol>
<symbol id="r1" viewBox="0 0 24 24"><path d="M1 12 12 6l11 4-7 8z" fill="#dfe8ff" stroke="#1a30c0"/><path d="M6 11c5 0 9 1 11 4" stroke="#e04018" stroke-width="2" fill="none"/><path d="M2 12c3 2 7 6 12 8" stroke="#1a30c0" stroke-width="1.500"/></symbol>
<symbol id="r2" viewBox="0 0 24 24"><path d="M2 7c1-5 8-6 8-2v6c0 4 0 9-5 9M22 3c-4 0-4 6-5 10s-4 8-15 8" fill="none" stroke="#111" stroke-width="1.200"/><path d="M9 9v8M20 9v8" stroke="#1a30c0" stroke-dasharray="1 1"/><path d="M13 6h4v5h2l-4 4-4-4h2z" fill="#f09020"/></symbol>
<symbol id="r3" viewBox="0 0 24 24"><ellipse cx="12" cy="13" rx="8" ry="6" fill="#d0e4e0" stroke="#888"/><circle cx="17" cy="8" r="5" fill="#d0e4e0" stroke="#888"/><path d="M1 1h21M17 1v21" stroke="#1a30c0" stroke-width="1.300"/><path d="M2 18 17 8" stroke="#d81818" stroke-width="1.300"/></symbol>
<symbol id="r4" viewBox="0 0 24 24"><path d="M2 7c1-5 6-6 8-2M22 3c-4 0-6 2-7 5M2 20c7 2 12-3 20-1M2 15c7 2 12-2 18-2" fill="none" stroke="#111" stroke-width="1.200"/><path d="M11 6h4v5h3l-5 5-5-5h3z" fill="#f09020"/></symbol>
<symbol id="r5" viewBox="0 0 24 24"><path d="M3 2h19M3 14l10-5 9 5-10 7z" fill="#dfe8ff" stroke="#1a30c0" stroke-width="1.200"/><path d="M12 2v8" stroke="#d81818" stroke-width="1.500"/><path d="M6 17l10-4" stroke="#e04018" stroke-width="1.600"/></symbol>
<symbol id="r6" viewBox="0 0 24 24"><path d="M3 3h20M1 22c6-2 11-5 15-8" fill="none" stroke="#1a30c0" stroke-width="1.300"/><path d="M13 2v17" stroke="#d81818" stroke-width="1.500"/><path d="M4 18l16-8M7 12l14 6" stroke="#e04018" stroke-width="2"/></symbol>
<symbol id="r7" viewBox="0 0 24 24"><path d="M1 3l7 2v16l-7-3z" fill="#fff" stroke="#333"/><path d="M9 6l12-5v20l-7 2-7-3z" fill="#f6dc70" stroke="#e0b020"/><path d="M11 10h11v12H11z" fill="#fff" stroke="#d81818"/><circle cx="16" cy="16" r="3" fill="none" stroke="#d81818"/></symbol>
<symbol id="r8" viewBox="0 0 24 24"><path d="M1 13 10 7v-6l11 6-4 4 6 3-10 6v3L4 17z" fill="#dfe8ff" stroke="#3a58a0"/><path d="M4 9l16 9" stroke="#d81818" stroke-width="1.600"/></symbol>
<symbol id="r9" viewBox="0 0 24 24"><path d="M1 3l12 2v17L1 19z" fill="#fff" stroke="#111" stroke-width="1.300"/><path d="M11 3l12-2v19l-10 2z" fill="#e8f4e0" stroke="#111" stroke-width="1.300"/><path d="M5 11l5-2 3 2v5l-5 2-3-2z" fill="#cfd8ff" stroke="#d81818"/><path d="M14 9l5-2v8l-5 2z" fill="none" stroke="#d81818"/></symbol>
<symbol id="ra" viewBox="0 0 24 24"><path d="M1 5h9v16c-2 2-7 2-9 0z" fill="url(#gc)"/><ellipse cx="5.500" cy="5" rx="4.500" ry="2" fill="#cfe0ff" stroke="#3a58c0"/><path d="M4 3h6v-2H4z" fill="#7090e0"/><path d="M10 13h9" stroke="#e06810" stroke-width="1.500"/><path d="M15 10l5 3-5 3z" fill="#e06810"/><path d="M20 3c4 6 4 14 0 19" fill="none" stroke="#d81818" stroke-width="1.300"/></symbol>

<symbol id="sel" viewBox="0 0 24 24"><circle cx="13" cy="12" r="8" fill="none" stroke="#333"/><circle cx="13" cy="12" r="3.500" fill="#f0e020" stroke="#887"/><path d="M13 1l3 4h-6zM13 23l3-4h-6zM3 12l4-3v6zM23 12l-4-3v6z" fill="#fff" stroke="#111"/><path d="M0 1l6 4-6 4z" fill="#10a040"/><path d="M0 15l6 4-6 4z" fill="#d81818"/></symbol>
<symbol id="tan" viewBox="0 0 24 24"><path d="M1 3h5c6 0 3 17 10 18h7" fill="none" stroke="#111" stroke-width="1.300"/><circle cx="11" cy="12" r="2.400" fill="#d81818"/></symbol>
<symbol id="crv" viewBox="0 0 24 24"><path d="M2 12 9 2l5 19 8-12" fill="none" stroke="#a020c0" stroke-width="1.300"/><path d="M2 12c3-8 7-5 10 1s7 4 10-4" fill="none" stroke="#111"/><circle cx="2.500" cy="12" r="2.200" fill="#d81818"/><circle cx="9" cy="3" r="2.200" fill="#d81818"/><circle cx="14" cy="21" r="2.200" fill="#d81818"/><circle cx="21.500" cy="9" r="2.200" fill="#d81818"/></symbol>
<symbol id="arc" viewBox="0 0 24 24"><path d="M1 16c3-6 7-7 11-7s8 2 11 7M12 1v22" fill="none" stroke="#111" stroke-width="1.200"/><circle cx="12" cy="9" r="2.400" fill="#d81818"/></symbol>
<symbol id="cir" viewBox="0 0 24 24"><circle cx="12" cy="12" r="10" fill="none" stroke="#111" stroke-width="1.300"/><path d="M12 8l1 3 3 1-3 1-1 3-1-3-3-1 3-1z" fill="#d81818"/></symbol>
<symbol id="cir2" viewBox="0 0 24 24"><circle cx="12" cy="12" r="9" fill="none" stroke="#111" stroke-width="1.300"/><g fill="#d81818"><circle cx="12" cy="3" r="2.400"/><circle cx="12" cy="21" r="2.400"/><circle cx="3" cy="12" r="2.400"/><circle cx="21" cy="12" r="2.400"/></g></symbol>
<symbol id="plus" viewBox="0 0 24 24"><path d="M12 1v22M1 12h22" stroke="#111" stroke-width="1.500"/><circle cx="12" cy="12" r="2.300" fill="#d81818"/></symbol>
<symbol id="gd" viewBox="0 0 24 24"><path d="M3 1l18 3v20L3 20zM9 2v19M15 3v19M3 6l18 3M3 11l18 3M3 16l18 3" fill="#ddd" stroke="#111"/><circle cx="15" cy="12" r="2" fill="#d81818"/></symbol>
<symbol id="tag" viewBox="0 0 24 24"><path d="M1 8 18 2l4 10-17 7z" fill="#f4d878" stroke="#8a7020"/><path d="M6 10l10-4M7 13l10-4" stroke="#fff"/><path d="M21 12c3 0 3 6 0 6" fill="none" stroke="#666"/></symbol>
<symbol id="f0" viewBox="0 0 24 24"><path d="M1 4h13v18H1z" fill="none" stroke="#889" stroke-width="2"/><path d="M1 14h13M7 14v8" stroke="#889"/><ellipse cx="13" cy="9" rx="5" ry="6" fill="none" stroke="#a08878" stroke-width="2.500"/><ellipse cx="18" cy="12" rx="5" ry="6" fill="none" stroke="#a08878" stroke-width="2.500"/></symbol>
<symbol id="fa" viewBox="0 0 24 24"><path d="M2 6c6-6 12-4 12 2l-3-2v4l6-1-3-1c0-8-8-10-13-5z" fill="#7f9898"/><path d="M5 12h17l-6 6v5h-5v-5z" fill="#a89878"/></symbol>
<symbol id="fb" viewBox="0 0 24 24"><circle cx="7" cy="7" r="4" fill="none" stroke="#d01818"/><path d="M7 1v12M1 7h12" stroke="#111" stroke-width="1.300"/><path d="M10 13h13l-5 5v5h-3v-5z" fill="#f0c020" stroke="#887010"/></symbol>
<symbol id="fc" viewBox="0 0 24 24"><path d="M2 7c3-5 10-4 10 2l2-1-3 5-4-4h2c0-3-4-4-6-1z" fill="#a09888"/><circle cx="14" cy="16" r="5" fill="none" stroke="#c09090" stroke-width="1.300"/><path d="M14 9v14M7 16h14" stroke="#888"/></symbol>
<symbol id="fd" viewBox="0 0 24 24"><path d="M1 4c3-3 8-3 11 0l6 3v4l-6 2-5-2-6-2z" fill="#8a8a80"/><path d="M16 13h6v9h-6z" fill="#a8a090" stroke="#777"/></symbol>
<symbol id="fe" viewBox="0 0 24 24"><path d="M3 4h18v16H3z" fill="none" stroke="#111" stroke-dasharray="2.500 2" stroke-width="1.300"/><circle cx="3" cy="3" r="2" fill="#d81818"/><circle cx="21" cy="21" r="2" fill="#d81818"/></symbol>
<symbol id="ff" viewBox="0 0 24 24"><path d="M1 8l8-6 14 5-6 13-15-2z" fill="#f4f4f4" stroke="#333"/><path d="M9 6l9 4" stroke="#e01818" stroke-width="1.600"/></symbol>
<symbol id="fg" viewBox="0 0 24 24"><path d="M2 6l10-5 10 5v12l-10 5-10-5z" fill="#7aa8f0" stroke="#1d30c0"/><path d="M12 11l10-5v12l-10 5z" fill="#2080e0"/><path d="M2 6l10 5v12" fill="none" stroke="#e04018"/></symbol>

<symbol id="tv" viewBox="0 0 24 24"><path d="M2 7l10-6 10 6v10l-10 6-10-6zM2 7l10 6 10-6M12 13v10M2 17l10-5 10 5M12 1v11" fill="#bff0d8" stroke="#14905c" stroke-width="1.400"/><path d="M9 23l12-5" stroke="#e04018" stroke-width="2"/></symbol>
<symbol id="cam" viewBox="0 0 24 24"><path d="M2 8 18 2l5 14-16 6z" fill="#fff" stroke="#e02818" stroke-width="1.400"/><path d="M8 11l7-3 3 6-7 3z" fill="#223090"/><circle cx="13" cy="12" r="2" fill="#90a8e0"/></symbol>
<symbol id="fl" viewBox="0 0 24 24"><path d="M2 6h8l2 2h8v5H2z" fill="#d8a820" stroke="#333"/><path d="M1 22 5 11h18l-4 11z" fill="#f8d858" stroke="#333"/></symbol>
<symbol id="ck" viewBox="0 0 24 24"><path d="M1 1h22v22H1z" fill="#fff" stroke="#111" stroke-width="2"/><path d="M5 12l5 6 9-13" fill="none" stroke="#18b030" stroke-width="4"/></symbol>
<symbol id="ok" viewBox="0 0 24 24"><path d="M2 12l7 8L22 4" fill="none" stroke="#18b030" stroke-width="5"/></symbol>
<symbol id="cc2" viewBox="0 0 24 24"><path d="M1 4l3 3v11l-3 1zM1 12h20M6 5l14 3-3 11-11 1z" fill="#fff" stroke="#333"/><path d="M5 1v7" stroke="#1a20c0"/><path d="M6 16l14-9" stroke="#20a020"/></symbol>
<symbol id="xc" viewBox="0 0 24 24"><path d="M2 11 14 2l2 8 6 4-11 8-2-8z" fill="#cfdcf0" stroke="#3a58a0"/><path d="M12 6l6 11" stroke="#d81818" stroke-width="1.800"/></symbol>
<symbol id="dot" viewBox="0 0 24 24"><path d="M12 1v22M1 12h22" stroke="#111" stroke-width="1.800"/></symbol>

<symbol id="a1" viewBox="0 0 24 24"><path d="M4 2l7 2v6H4zM11 6h5v5h-5z" fill="#f0d050" stroke="#b08010"/><path d="M5 11v11M5 17h9" stroke="#1a30c0" stroke-width="1.300"/><path d="M14 16l5-2 4 2v5l-4 2-5-2z" fill="#f0d050" stroke="#b08010"/><path d="M14 8h9" stroke="#222"/></symbol>
<symbol id="a2" viewBox="0 0 24 24"><path d="M4 2l8 6 8-6v12l-8-6-8 6z" fill="#1424d0"/><path d="M2 15h10v8H2z" fill="#f6f060" stroke="#888"/><path d="M13 14l9 9h-9z" fill="#c01818"/></symbol>
<symbol id="a3" viewBox="0 0 24 24"><path d="M4 1h10v7H4z" fill="#d8b0c0" stroke="#802050"/><ellipse cx="9" cy="2" rx="5" ry="2" fill="#a05078"/><path d="M7 8v15M7 16h8" stroke="#1a30c0" stroke-width="1.300"/><path d="M12 2h9" stroke="#222"/><circle cx="18" cy="17" r="5" fill="#e0d0e0" stroke="#802050"/><circle cx="18" cy="17" r="1.600" fill="#802050"/></symbol>
<symbol id="a4" viewBox="0 0 24 24"><path d="M1 6l6-2v17l-6 2z" fill="#f08a20" stroke="#804010"/><path d="M7 4l6-2v17l-6 2z" fill="#20b040" stroke="#105020"/><path d="M13 3l7-2 3 2v17l-10 1z" fill="#3aa0e8" stroke="#104a80"/></symbol>
<symbol id="a5" viewBox="0 0 24 24"><circle cx="9" cy="15" r="8" fill="#1878d8" stroke="#0a3a80"/><text x="6.500" y="21" font-size="14" font-weight="700" font-family="Liberation Serif" fill="#fff">i</text><path d="M12 5c5 0 8 3 9 9M12 1c7 0 12 5 12 13" fill="none" stroke="#2c6cc8" stroke-width="2.200"/></symbol>
<symbol id="a6" viewBox="0 0 24 24"><path d="M4 1h11l5 5v17H4z" fill="#fff" stroke="#2448c0" stroke-width="1.200"/><circle cx="12" cy="14" r="5.500" fill="#3ca050" stroke="#206090"/></symbol>
<symbol id="a7" viewBox="0 0 24 24"><circle cx="12" cy="12" r="11" fill="#8aa8c8" stroke="#445"/><circle cx="12" cy="12" r="8.500" fill="#f4f8ff" stroke="#667"/><path d="M12 6v6h6" fill="none" stroke="#111" stroke-width="1.500"/></symbol>
<symbol id="a8" viewBox="0 0 24 24"><path d="M3 3h8v19H3z" fill="#14c"/><path d="M3 3h8v5H3z" fill="#e01818"/><path d="M3 8h8v4H3z" fill="#f0e020"/><path d="M3 12h8v5H3z" fill="#18c040"/><path d="M12 6l10 14" stroke="#222" stroke-width="2.600"/><path d="M13 1l1 3 3 1-3 1-1 3-1-3-3-1 3-1z" fill="#fff"/></symbol>
<symbol id="a9" viewBox="0 0 24 24"><path d="M4 4l8-2-3 19H3z" fill="#3a88e0" stroke="#1a40a0"/><path d="M2 10l10 12M4 4h18L12 13" fill="none" stroke="#2a58c0"/><path d="M13 5l9 13" stroke="#222" stroke-width="2.400"/><path d="M2 22h8" stroke="#f0d020"/></symbol>
<symbol id="aa" viewBox="0 0 24 24"><path d="M14 1c4 0 8 2 8 5-3-1-5 0-6 1l-5 10-5 4-2-3 5-5 4-10z" fill="#8a8a90" stroke="#444"/><path d="M1 19l6-3 3 3-3 4z" fill="#f09020"/><path d="M6 5l5 2 8 13-3 2-6-11-5-2z" fill="#bbb" stroke="#444"/></symbol>
<symbol id="ab" viewBox="0 0 24 24"><path d="M1 5l7-3v19l-7 2z" fill="#fff" stroke="#777"/><path d="M8 4h15v15H8z" fill="#fff" stroke="#888"/><path d="M11 6h9v9h-9z" fill="#e02818"/><path d="M13 6h5l-2 6z" fill="#4a88e0"/><path d="M10 15h11v2H10z" fill="#f0c080"/></symbol>
<symbol id="ac" viewBox="0 0 24 24"><path d="M1 5l7-3v19l-7 2z" fill="#fff" stroke="#777"/><path d="M8 4h15v17H8z" fill="#fff" stroke="#888"/><circle cx="11" cy="8" r="2" fill="#2448d0"/><circle cx="11" cy="13" r="2" fill="#20a040"/><circle cx="11" cy="18" r="2" fill="#d81818"/><path d="M15 8h6M15 13h6M15 18h6" stroke="#333"/></symbol>
</defs>
</svg>

<div class="title">
  <svg class="tlogo"><use href="#lg"/></svg>
  <span class="ttext">NX 10.0.3.5 - 建模 - [球形类似均布参数化.prt （修改的） ]</span>
  <span class="siemens">SIEMENS</span>
  <span class="wb">_</span><span class="wb">❐</span><span class="wb wc">✕</span>
</div>

<div class="menu">
  <i class="g"></i><svg class="mlogo"><use href="#br"/></svg>
  <nav class="mitems">
    <span>文件<span class="k">(<u>F</u>)</span></span>
    <span>编辑<span class="k">(<u>E</u>)</span></span>
    <span>视图<span class="k">(<u>V</u>)</span></span>
    <span>插入<span class="k">(<u>S</u>)</span></span>
    <span>格式<span class="k">(<u>R</u>)</span></span>
    <span>工具<span class="k">(<u>T</u>)</span></span>
    <span>装配<span class="k">(<u>A</u>)</span></span>
    <span>信息<span class="k">(<u>I</u>)</span></span>
    <span>分析<span class="k">(<u>L</u>)</span></span>
    <span class="mg">首选项<span class="k">(<u>P</u>)</span></span>
    <span>窗口<span class="k">(<u>O</u>)</span></span>
    <span><span class="k">GC</span>工具箱</span>
    <span>帮助<span class="k">(<u>H</u>)</span></span>
  </nav>
  <div class="dbtns"><span class="db">_</span><span class="db">❐</span><span class="db">✕</span></div>
</div>

<div class="row">
  <div class="bar">
  <i class="g"></i>
  <i class="b"><svg><use href="#lg"/></svg></i><span class="lab">启动</span><i class="d"></i>
  <i class="b"><svg><use href="#dc"/></svg></i><i class="b"><svg><use href="#fo"/></svg></i><i class="b"><svg><use href="#sv"/></svg></i><i class="b"><svg><use href="#pr"/></svg></i><i class="p"></i>
  <i class="b"><svg><use href="#un"/></svg></i><i class="d"></i><i class="b"><svg><use href="#re"/></svg></i><i class="p"></i>
  <i class="b"><svg><use href="#bk"/></svg></i><i class="d"></i><i class="mo"></i><i class="p"></i><i class="g"></i>
  <i class="b"><svg><use href="#ft"/></svg></i><i class="d"></i><i class="b"><svg><use href="#ft"/></svg></i><i class="b"><svg><use href="#wc"/></svg></i>
  <span class="lab lab2">重新生成工作视图</span>
  <i class="b"><svg><use href="#bk"/></svg></i><i class="d"></i><i class="b"><svg><use href="#c1"/></svg></i><i class="d"></i>
  <i class="b"><svg><use href="#c1"/></svg></i><i class="b"><svg><use href="#c3"/></svg></i><i class="b"><svg><use href="#w1"/></svg></i><i class="b"><svg><use href="#w2"/></svg></i><i class="b"><svg><use href="#w3"/></svg></i><i class="b"><svg><use href="#ct"/></svg></i><i class="b"><svg><use href="#gr"/></svg></i><i class="d"></i><i class="p"></i>
  <i class="b"><svg><use href="#pa"/></svg></i><i class="d"></i><i class="b"><svg><use href="#pa"/></svg></i><i class="b"><svg><use href="#pb"/></svg></i><i class="d d8"></i><i class="p"></i><i class="g"></i>
  <span class="combo cb0"><span>1</span><i class="cbtn"></i></span>
  <i class="b"><svg><use href="#la"/></svg></i><i class="b"><svg><use href="#la"/></svg></i><i class="d"></i>
  <i class="b"><svg><use href="#cs"/></svg></i><i class="d"></i><i class="b"><svg><use href="#cq"/></svg></i><i class="b"><svg><use href="#cp"/></svg></i><i class="b"><svg><use href="#cs"/></svg></i><i class="b"><svg><use href="#co"/></svg></i><i class="b"><svg><use href="#cl"/></svg></i><i class="b"><svg><use href="#cf"/></svg></i><i class="p"></i>
  <i class="b"><svg><use href="#pal"/></svg></i><i class="p"></i><i class="b"><svg><use href="#vw"/></svg></i><i class="b"><svg><use href="#vv"/></svg></i><i class="p"></i>
  <i class="b"><svg><use href="#dt"/></svg></i><i class="d"></i><i class="b"><svg><use href="#ru"/></svg></i><i class="d"></i>
  </div>
</div>

<div class="row">
  <div class="bar">
  <i class="g"></i>
  <i class="b"><svg><use href="#rc"/></svg></i><i class="d"></i><i class="b"><svg><use href="#ex"/></svg></i><i class="d"></i><i class="b"><svg><use href="#ex"/></svg></i><i class="b"><svg><use href="#sh"/></svg></i>
  <i class="b"><svg><use href="#h1"/></svg></i><i class="b"><svg><use href="#h2"/></svg></i><i class="b"><svg><use href="#h3"/></svg></i><i class="b"><svg><use href="#h4"/></svg></i><i class="b"><svg><use href="#ds"/></svg></i><i class="b"><svg><use href="#h5"/></svg></i><i class="b"><svg><use href="#cy"/></svg></i><i class="b"><svg><use href="#sl"/></svg></i><i class="b"><svg><use href="#c2"/></svg></i><i class="b"><svg><use href="#cc"/></svg></i><i class="b"><svg><use href="#cn"/></svg></i><i class="b"><svg><use href="#sp"/></svg></i><i class="b"><svg><use href="#nx"/></svg></i><i class="b"><svg><use href="#th"/></svg></i><i class="p"></i>
  <i class="b"><svg><use href="#pt"/></svg></i><i class="d"></i><i class="b"><svg><use href="#up"/></svg></i><i class="b"><svg><use href="#pt"/></svg></i><i class="b"><svg><use href="#bo"/></svg></i><i class="b"><svg><use href="#mr"/></svg></i><i class="b"><svg><use href="#tc"/></svg></i><i class="d"></i>
  <i class="b"><svg><use href="#e1"/></svg></i><i class="b"><svg><use href="#e2"/></svg></i><i class="b"><svg><use href="#e3"/></svg></i><i class="d"></i><i class="b"><svg><use href="#e3"/></svg></i><i class="b"><svg><use href="#e4"/></svg></i><i class="b"><svg><use href="#e5"/></svg></i><i class="b"><svg><use href="#e6"/></svg></i><i class="d"></i><i class="b"><svg><use href="#e6"/></svg></i>
  <i class="b"><svg><use href="#b1"/></svg></i><i class="b"><svg><use href="#b2"/></svg></i><i class="b"><svg><use href="#b3"/></svg></i><i class="p"></i>
  <i class="b"><svg><use href="#f1"/></svg></i><i class="d"></i><i class="b"><svg><use href="#f1"/></svg></i><i class="b"><svg><use href="#f2"/></svg></i><i class="b"><svg><use href="#f3"/></svg></i><i class="b"><svg><use href="#f4"/></svg></i><i class="d"></i>
  </div>
</div>

<div class="row">
  <div class="bar">
  <i class="g"></i>
  <i class="b"><svg><use href="#ky"/></svg></i><i class="b"><svg><use href="#t1"/></svg></i><i class="b"><svg><use href="#t2"/></svg></i><i class="b"><svg><use href="#t3"/></svg></i><i class="b"><svg><use href="#t4"/></svg></i><i class="d d10"></i><i class="p"></i><i class="g g6"></i>
  <i class="b"><svg><use href="#q1"/></svg></i><i class="d"></i><i class="b"><svg><use href="#q1"/></svg></i><i class="b"><svg><use href="#q2"/></svg></i><i class="b"><svg><use href="#q3"/></svg></i><i class="b"><svg><use href="#q4"/></svg></i><i class="b"><svg><use href="#q5"/></svg></i><i class="b"><svg><use href="#q6"/></svg></i><i class="d"></i><i class="b"><svg><use href="#q7"/></svg></i><i class="b"><svg><use href="#q8"/></svg></i><i class="d"></i><i class="b"><svg><use href="#q5"/></svg></i><i class="d"></i><i class="b"><svg><use href="#q9"/></svg></i><i class="d"></i><i class="b"><svg><use href="#qg"/></svg></i><i class="d"></i><i class="b"><svg><use href="#qa"/></svg></i><i class="b"><svg><use href="#qc"/></svg></i><i class="b"><svg><use href="#qd"/></svg></i><i class="d"></i><i class="b"><svg><use href="#qe"/></svg></i><i class="d"></i><i class="d"></i><i class="p"></i><i class="g"></i>
  <i class="b"><svg><use href="#s1"/></svg></i><i class="d"></i><i class="b"><svg><use href="#s1"/></svg></i><i class="b"><svg><use href="#s2"/></svg></i><i class="d"></i><i class="b"><svg><use href="#s2"/></svg></i><i class="b"><svg><use href="#s3"/></svg></i><i class="b"><svg><use href="#s4"/></svg></i><i class="b"><svg><use href="#s5"/></svg></i><i class="b"><svg><use href="#s6"/></svg></i><i class="d"></i><i class="b"><svg><use href="#s6"/></svg></i><i class="b"><svg><use href="#s7"/></svg></i><i class="b"><svg><use href="#s8"/></svg></i><i class="b"><svg><use href="#s9"/></svg></i><i class="b"><svg><use href="#sa"/></svg></i><i class="b"><svg><use href="#sb"/></svg></i><i class="d"></i>
  </div>
</div>

<main class="main">
  <aside class="rail">
    <div class="gear">⚙</div>
    <div class="tab t0"><svg><use href="#a1"/></svg></div>
    <div class="tab"><svg><use href="#a2"/></svg></div>
    <div class="tab on"><svg><use href="#a3"/></svg></div>
    <div class="tab"><svg><use href="#a4"/></svg></div>
    <div class="tab tg"><svg><use href="#a5"/></svg></div>
    <div class="tab tg"><svg><use href="#a6"/></svg></div>
    <div class="tab tg"><svg><use href="#a7"/></svg></div>
    <div class="tab"><svg><use href="#a8"/></svg></div>
    <div class="tab"><svg><use href="#a9"/></svg></div>
    <div class="tab"><svg><use href="#aa"/></svg></div>
    <div class="tab"><svg><use href="#ab"/></svg></div>
    <div class="tab"><svg><use href="#ac"/></svg></div>
  </aside>

  <section class="panel">
    <header class="phead"><span>部件导航器</span><i class="maxi"></i></header>
    <div class="tbox">
      <div class="thead">名称<i class="sort"></i></div>
      <div class="tcorner"></div>
      <div class="rows">
        <div class="r"><i class="tw"></i><svg class="ic ic18"><use href="#tv"/></svg><span class="zh">模型视图</span></div>
        <div class="r w"><i class="tw"></i><svg class="ok"><use href="#ok"/></svg><svg class="ic ic15"><use href="#cam"/></svg><span class="zh">摄像机</span></div>
        <div class="r"><i class="tw mn"></i><svg class="ic ic18"><use href="#fl"/></svg><span class="zh">用户表达式</span></div>
        <div class="r w e"><i class="eq"></i><span class="ex">a=ug_askcurrent</span></div>
        <div class="r e"><i class="eq"></i><span class="ex">c=ug_setpartatt</span></div>
        <div class="r w e"><i class="eq"></i><span class="ex">d=splitstring(a</span></div>
        <div class="r e"><i class="eq"></i><span class="ex">DATE=Year+"."+m</span></div>
        <div class="r w e"><i class="eq"></i><span class="ex">day=subString(d</span></div>
        <div class="r e"><i class="eq"></i><span class="ex">e=First(d)</span></div>
        <div class="r w e"><i class="eq"></i><span class="ex">m=second(d)</span></div>
        <div class="r e"><i class="eq"></i><span class="ex">month=If (subSt</span></div>
        <div class="r w e"><i class="eq"></i><span class="ex">n=ug_setpartatt</span></div>
        <div class="r e sel"><i class="eq"></i><span class="ex">nn=7</span></div>
        <div class="r w e"><i class="eq"></i><span class="ex">Year=subString</span></div>
        <div class="r"><i class="tw mn"></i><svg class="ic ic18"><use href="#fl"/></svg><span class="zh">模型历史记录</span></div>
        <div class="r w h"><svg class="cb"><use href="#ck"/></svg><svg class="ic ic16"><use href="#cc2"/></svg><span class="zh dim">基准坐标系（0）</span></div>
        <div class="r h"><svg class="cb"><use href="#ck"/></svg><svg class="ic ic16"><use href="#sp"/></svg><span class="zh">球（1）</span></div>
        <div class="r w h"><svg class="cb"><use href="#ck"/></svg><svg class="ic ic16"><use href="#xc"/></svg><span class="zh dim">相交曲线（2）</span></div>
        <div class="r h"><svg class="cb"><use href="#ck"/></svg><svg class="ic ic16"><use href="#dot"/></svg><span class="zh">点（3）</span></div>
        <div class="r w h"><svg class="cb"><use href="#ck"/></svg><svg class="ic ic16"><use href="#sp"/></svg><span class="zh">球（4）</span></div>
        <div class="r h"><svg class="cb"><use href="#ck"/></svg><svg class="ic ic16"><use href="#bo"/></svg><span class="zh">阵列几何特征</span></div>
        <div class="r w h hp"><i class="tw"></i><svg class="cb"><use href="#ck"/></svg><svg class="ic ic16"><use href="#pt"/></svg><span class="zh">阵列特征 ［线性］</span></div>
        <div class="r h hp"><i class="tw"></i><svg class="cb"><use href="#ck"/></svg><svg class="ic ic16"><use href="#pt"/></svg><span class="zh bold">阵列特征 ［线性］</span></div>
        <i class="vl vl0"></i><i class="vl vl1"></i><i class="vl vl2"></i>
      </div>
      <div class="vs"><i class="sb up"></i><i class="hatch hv"></i><i class="thumb"></i><i class="sb down"></i></div>
      <div class="hs"><i class="sb left"></i><i class="hthumb"></i><i class="hatch hh"></i><i class="sb right"></i></div>
      <div class="tcorner"></div>
    </div>
    <div class="split"><i></i></div>
    <div class="acc"><span>相依性</span><i class="chev"></i></div>
    <div class="acc"><span>细节</span><i class="chev"></i></div>
    <div class="acc"><span>预览</span><i class="chev"></i></div>
  </section>

  <div class="canvas">
    <svg class="scene" viewBox="243 154 1311 638">
      <g fill="url(#bp)">
        <circle cx="834" cy="294" r="11"/><circle cx="894" cy="286" r="12"/><circle cx="965" cy="305" r="12"/><circle cx="1018" cy="346" r="11"/><circle cx="740" cy="347" r="11"/><circle cx="693" cy="429" r="11.500"/><circle cx="1073" cy="445" r="12"/><circle cx="688" cy="506" r="10"/><circle cx="1070" cy="520" r="9"/><circle cx="1028" cy="603" r="11"/><circle cx="725" cy="596" r="11"/><circle cx="790" cy="648" r="9"/><circle cx="835" cy="669" r="11"/><circle cx="953" cy="661" r="11"/>
      </g>
      <circle cx="881" cy="480" r="190.500" fill="url(#gs)"/>
      <circle cx="881" cy="480" r="190.500" fill="url(#ge)"/>
      <circle cx="835" cy="410" r="120" fill="url(#gh2)"/>
      <circle cx="940" cy="410" r="90" fill="url(#gh1)"/>
      <g fill="url(#bp)">
        <ellipse cx="808" cy="310" rx="12" ry="9"/><ellipse cx="936" cy="312" rx="12" ry="10"/><circle cx="866" cy="345" r="12"/><circle cx="966" cy="374" r="11.500"/><ellipse cx="1034" cy="375" rx="10" ry="11"/><ellipse cx="746" cy="371" rx="10.500" ry="11"/><circle cx="801" cy="403" r="11.700"/><circle cx="888" cy="434" r="12"/><circle cx="981" cy="455" r="11.700"/><ellipse cx="1050" cy="459" rx="9.500" ry="12"/><ellipse cx="711" cy="450" rx="9.500" ry="12"/><ellipse cx="757" cy="476" rx="11" ry="12"/><circle cx="823" cy="503" r="12"/><circle cx="900" cy="525" r="12"/><circle cx="973" cy="540" r="12"/><ellipse cx="1031" cy="544" rx="10" ry="12"/><ellipse cx="1065" cy="537" rx="8.500" ry="11.500"/><ellipse cx="699" cy="527" rx="8.500" ry="12"/><ellipse cx="756" cy="559" rx="11" ry="11.500"/><ellipse cx="844" cy="591" rx="12" ry="11"/><ellipse cx="936" cy="612" rx="12" ry="10.500"/><ellipse cx="1005" cy="617" rx="12" ry="8" transform="rotate(-35 1005 617)"/><ellipse cx="786" cy="629" rx="12" ry="7.500" transform="rotate(30 786 629)"/><ellipse cx="886" cy="658" rx="12.500" ry="7.500"/>
      </g>
      <path d="M288 708l24 8-5 18-22-3-4-6z" fill="#8e8e8e"/>
      <path d="M288 708l-3 17 22 9M285 725l17-3 10-6" fill="none" stroke="#b0b0b0"/>
      <path d="M296 736 277 724" stroke="#2a8a3a" stroke-width="2"/>
      <path d="M296 736 325 739" stroke="#c03030" stroke-width="2"/>
      <path d="M296 736 305 703" stroke="#1838e0" stroke-width="3"/>
      <circle cx="296" cy="736" r="4" fill="#ddd"/>
      <g font-family="Liberation Sans" font-size="11">
        <text x="303" y="702" fill="#1838e0">Z</text><text x="325" y="745" fill="#c83030">X</text><text x="269" y="727" fill="#2a8a3a">Y</text>
      </g>
    </svg>
  </div>

  <aside class="rbar">
    <i class="rg"></i>
    <i class="rb rf"><svg><use href="#pl"/></svg></i>
    <i class="rb"><svg><use href="#pl"/></svg></i>
    <i class="rb"><svg><use href="#pc"/></svg></i>
    <i class="rb"><svg><use href="#rn"/></svg></i>
    <i class="rb"><svg><use href="#pr2"/></svg></i>
    <i class="rb"><svg><use href="#px"/></svg></i>
    <i class="rb"><svg><use href="#pg"/></svg></i>
    <i class="rb ra">A</i>
    <i class="rb"><svg><use href="#ht"/></svg></i>
    <i class="rb"><svg><use href="#r1"/></svg></i>
    <i class="rb"><svg><use href="#r2"/></svg></i>
    <i class="rb"><svg><use href="#r3"/></svg></i>
    <i class="rb"><svg><use href="#r4"/></svg></i>
    <i class="rb"><svg><use href="#r5"/></svg></i>
    <i class="rb"><svg><use href="#r6"/></svg></i>
    <i class="rb"><svg><use href="#r7"/></svg></i>
    <i class="rb"><svg><use href="#r8"/></svg></i>
    <i class="rb"><svg><use href="#r9"/></svg></i>
    <i class="rb"><svg><use href="#ra"/></svg></i>
  </aside>
</main>

<footer class="foot">
  <div class="fbar">
    <span class="combo cb1"><span>无选择过滤器</span><i class="cbtn"></i></span>
    <span class="combo cb2"><span>仅在工作部件内</span><i class="cbtn"></i></span>
    <i class="b fs"><svg><use href="#f0"/></svg></i><i class="p p7"></i>
    <i class="b"><svg><use href="#fa"/></svg></i>
    <i class="rbox"><svg><use href="#fb"/></svg></i><i class="d d14"></i>
    <i class="b"><svg><use href="#fc"/></svg></i><i class="b"><svg><use href="#fd"/></svg></i><i class="p p8"></i>
    <i class="b"><svg><use href="#fe"/></svg></i><i class="d"></i><i class="p"></i>
    <i class="b"><svg><use href="#ff"/></svg></i><i class="b"><svg><use href="#fg"/></svg></i><i class="p"></i>
    <i class="t"><svg><use href="#sel"/></svg></i><i class="t"><svg><use href="#pe"/></svg></i><i class="t"><svg><use href="#pm"/></svg></i>
    <i class="b"><svg><use href="#tan"/></svg></i>
    <i class="t"><svg><use href="#crv"/></svg></i>
    <i class="b"><svg><use href="#arc"/></svg></i>
    <i class="t"><svg><use href="#cir"/></svg></i>
    <i class="b"><svg><use href="#cir2"/></svg></i>
    <i class="t"><svg><use href="#plus"/></svg></i><i class="t"><svg><use href="#pq"/></svg></i>
    <i class="b"><svg><use href="#px"/></svg></i><i class="p p8"></i>
    <i class="b b26"><svg><use href="#gd"/></svg></i><i class="p p12"></i>
    <i class="b b24"><svg><use href="#tag"/></svg></i>
    <span class="msg">更新以获取外部更改</span>
  </div>
  <div class="fst"><i></i><i></i><i class="fo"></i></div>
</footer>

<svg class="over" viewBox="0 0 1593 829" aria-hidden="true">
  <path d="M173 461.300 662 470v7L173 462.500z" fill="#f03434"/>
  <path d="M661 466l18 8-18 8z" fill="#f03434"/>
  <rect x="75" y="473.500" width="92" height="7.500" rx="3.700" fill="#e6202c"/>
  <g opacity=".78">
    <path d="M1346 735l36 20v40l-36 20-36-20v-40z" fill="#1a6f9e"/>
    <path d="M1346 735v16l-22 13-14-9zM1310 755v40l14-8v-23z" fill="#5e8aa2"/>
    <path d="M1346 751l22 13v24l-22 13-22-13v-24z" fill="#0a1820"/>
    <path d="M1346 754l19 10-19 10-19-10z" fill="#5d8296"/>
    <path d="M1327 764l19 10v23l-19-10z" fill="#26566e"/>
    <path d="M1365 764l-19 10v23l19-10z" fill="#024f73"/>
  </g>
  <text class="wm1" x="1389" y="784">3D世界网</text>
  <text class="wm2" x="1391" y="802">WWW.3DSJW.COM</text>
  <path d="M1568 757l24 6v14l-10 17-14-16z" fill="#e8304a"/>
  <ellipse cx="1578" cy="757" rx="9" ry="5" fill="#333"/>
  <text class="yi" x="1578" y="773">3</text>
  <text class="yi" x="1574" y="787">亿</text>
  <rect x="1590" y="740" width="3" height="55" fill="#444"/>
</svg>
</body>
</html>
```

FILE: styles.css
```css
* { box-sizing: border-box; }
html, body { margin: 0; padding: 0; }
body {
  position: relative;
  width: 1593px;
  height: 829px;
  overflow: hidden;
  display: flex;
  flex-direction: column;
  background: #d4d4d4;
  font-family: "Liberation Mono", "Noto Sans CJK SC", monospace;
  color: #111;
}
i { font-style: normal; display: block; flex: none; }
.defs { position: absolute; width: 0; height: 0; }

.title {
  height: 26px;
  flex: none;
  display: flex;
  align-items: flex-start;
  color: #fff;
  background: linear-gradient(#545454, #7c7c7c 6px, #1a1a1a 6px, #1a1a1a 25px, #000 25px);
}
.tlogo { width: 23px; height: 22px; margin: 3px 1px 0 3px; flex: none; }
.ttext { font-size: 15.3px; letter-spacing: .18px; line-height: 20px; margin-top: 4px; white-space: pre; -webkit-text-stroke: .35px #fff; }
.siemens { margin-left: auto; margin-right: 26px; margin-top: 6px; font: 700 14.5px/17px "Liberation Sans", sans-serif; letter-spacing: .1px; }
.wb {
  width: 21px; height: 19px; margin: 4px 1px 0 0; flex: none;
  border: 1px solid #666; border-radius: 3px;
  background: linear-gradient(#777, #2c2c2c);
  color: #fff; font: 700 12px/15px "DejaVu Sans", sans-serif; text-align: center;
}
.wc { background: linear-gradient(#f0785a, #d84a20); width: 17px; margin-right: 0; }

.menu {
  height: 26px; flex: none;
  display: flex; align-items: center;
  padding-left: 4px;
  background: linear-gradient(#ebebeb, #dcdcdc);
  border-bottom: 1px solid #b4b4b4;
  font-size: 14.6px;
}
.g {
  width: 4px; height: 24px; flex: none;
  background-image: radial-gradient(circle, #8c8c8c 1px, transparent 1.2px);
  background-size: 4px 4px;
  margin: 0;
}
.menu .g { height: 18px; }
.mlogo { width: 19px; height: 19px; margin-left: 1px; flex: none; }
.mitems { display: flex; gap: 16px; margin: 0 0 4px 7px; white-space: nowrap; }
.mitems .mg { margin-left: 16px; }
.k { font-size: 12.200px; }
.dbtns { margin-left: auto; display: flex; gap: 3px; margin-right: 3px; }
.db {
  width: 17px; height: 16px;
  border: 1px solid #888; border-radius: 3px;
  background: linear-gradient(#fff, #d6d6d6);
  color: #444; font: 700 10px/13px "DejaVu Sans", sans-serif; text-align: center;
}

.row { height: 34px; flex: none; display: flex; }
.bar {
  display: flex; align-items: center; padding: 0 3px 0 4px; height: 33px;
  background: linear-gradient(#e0e0e0, #d0d0d0);
  border-top: 1px solid #efefef;
  border-bottom: 1px solid #a8a8a8;
  border-right: 1px solid #a8a8a8;
  white-space: nowrap;
}
.b { width: 31px; height: 24px; display: flex; align-items: center; justify-content: center; }
.b svg { width: 23px; height: 23px; display: block; }
.b24 { width: 24px; }
.b26 { width: 26px; }
.d { width: 12px; height: 24px; position: relative; }
.d::after {
  content: ""; position: absolute; left: 2px; top: 11px;
  border-left: 3.500px solid transparent; border-right: 3.500px solid transparent; border-top: 4px solid #111;
}
.d8 { width: 8px; }
.d8::after { left: 0; top: 18px; }
.d10 { width: 10px; }
.d10::after { left: 1px; top: 17px; }
.d14 { width: 15px; }
.p { width: 5px; height: 30px; position: relative; }
.p::after { content: ""; position: absolute; left: 2px; top: 0; bottom: 0; width: 2px; background: #f2f2f2; border-left: 1px solid #b4b4b4; }
.p7 { width: 7px; } .p8 { width: 8px; } .p12 { width: 12px; }
.g6 { margin-right: 2px; }
.mo { width: 12px; height: 24px; position: relative; }
.mo::before { content: "»"; position: absolute; left: -2px; top: -8px; font: 700 11px/14px "DejaVu Sans", sans-serif; }
.mo::after { content: ""; position: absolute; left: 1px; top: 18px; border-left: 3.500px solid transparent; border-right: 3.500px solid transparent; border-top: 4px solid #111; }
.lab { font-size: 14.8px; line-height: 24px; }
.bar .lab:not(.lab2) { width: 30px; margin-left: 1px; flex: none; }
.lab2 { margin: 0 4px 0 4.500px; letter-spacing: 0; }

.combo {
  display: flex; align-items: center; flex: none;
  height: 20px;
  background: #fff;
  border: 1px solid #8a8a8a;
  border-radius: 3px;
  font-size: 15px;
  line-height: 18px;
  overflow: hidden;
}
.combo > span { flex: 1; padding-left: 1px; white-space: nowrap; overflow: hidden; }
.cb0 { width: 49px; margin: 0 6px 0 4px; font-size: 14px; }
.cb1 { width: 145px; margin-left: 6px; }
.cb2 { width: 154px; margin-left: 10px; }
.cbtn { width: 18px; height: 18px; background: linear-gradient(#a8cdf4, #2e6ec4); position: relative; }
.cbtn::after {
  content: ""; position: absolute; left: 3px; top: 6px;
  border-left: 6px solid transparent; border-right: 6px solid transparent; border-top: 7px solid #111;
}

.main { height: 638px; flex: none; display: flex; position: relative; }
.rail { width: 31px; flex: none; background: #ababab; display: flex; flex-direction: column; align-items: flex-end; }
.gear { width: 31px; height: 30px; text-align: center; font: 20px/28px "DejaVu Sans", sans-serif; color: #333; background: #b4b4b4; flex: none; }
.tab {
  width: 26px; height: 39px; margin: 0 1px 3px 0; flex: none;
  border: 1px solid #8a8a8a; border-right: none;
  border-radius: 4px 0 0 4px;
  background: linear-gradient(90deg, #e8e8e8, #cfcfcf);
  display: flex; align-items: center; justify-content: center;
}
.tab svg { width: 22px; height: 22px; }
.t0 { margin-top: 16px; }
.tab.on { width: 29px; height: 44px; margin: -2px 0 2px; background: #ececec; }
.tg { margin-top: 11px; }

.panel {
  width: 212px; flex: none;
  background: #ececec;
  border-right: 2px solid #fafafa;
  padding: 0 9px 0 7px;
  display: flex; flex-direction: column;
}
.phead { height: 37px; flex: none; display: flex; align-items: center; justify-content: space-between; padding: 0 6px 2px 6px; font-size: 15px; font-weight: 700; }
.maxi { width: 15px; height: 15px; border: 1px solid #111; border-top-width: 3px; background: #fff; }
.tbox {
  height: 504px; flex: none;
  border: 1px solid #777;
  display: grid;
  grid-template-columns: 173px 20px;
  grid-template-rows: 18px 463px 21px;
  background: #d4d0c8;
}
.thead { background: linear-gradient(#f2f2f2, #dcdcdc); font-size: 15px; line-height: 20px; padding: 1px 0 0 7px; letter-spacing: 1px; position: relative; overflow: hidden; }
.sort { position: absolute; left: 52px; top: 6px; border-left: 5px solid transparent; border-right: 5px solid transparent; border-bottom: 6px solid #222; }
.tcorner { background: #bcbcbc; }
.rows { position: relative; background: #fff; overflow: hidden; }
.r {
  height: 20px; display: flex; align-items: center;
  padding: 2px 0 0 5px;
  background: #f5f5f5;
  border-bottom: 1px solid #e6e6e6;
  white-space: nowrap; overflow: hidden;
  position: relative;
}
.r.w { background: #fff; }
.tw { width: 9px; height: 9px; border: 1px solid #777; background: linear-gradient(#000, #000) center/5px 1px no-repeat, linear-gradient(#000, #000) center/1px 5px no-repeat, #fff; margin-right: 5px; position: relative; z-index: 1; }
.tw.mn { background: linear-gradient(#000, #000) center/5px 1px no-repeat, #fff; }
.ic { flex: none; display: block; }
.ic18 { width: 18px; height: 18px; }
.ic15 { width: 15px; height: 15px; margin-left: 1px; }
.ic16 { width: 16px; height: 16px; margin-left: 2px; }
.ok { width: 13px; height: 13px; margin-left: 3px; flex: none; }
.zh { font-size: 14.6px; margin-left: 3px; line-height: 19px; padding-top: 2px; }
.dim { color: #9a9a9a; }
.bold { font-weight: 700; }
.e { padding-left: 42px; }
.e::after, .h::after { content: ""; position: absolute; left: 30px; top: 10px; width: 10px; border-top: 1px dotted #777; }
.eq { width: 10px; height: 7px; border-top: 2px solid #2b2070; border-bottom: 2px solid #2b2070; }
.ex { font-size: 13.330px; margin-left: 6px; line-height: 19px; padding-top: 4px; }
.sel::before { content: ""; position: absolute; left: 55px; top: 0; right: 0; bottom: 0; border: 1px dotted #222; border-right: none; }
.h { padding-left: 41px; }
.cb { width: 12px; height: 12px; flex: none; }
.hp { padding-left: 24px; }
.hp .tw { margin-right: 8px; }
.hp::after { display: none; }
.vl { position: absolute; width: 0; border-left: 1px dotted #777; }
.vl0 { left: 10px; top: 0; height: 290px; }
.vl1 { left: 29px; top: 50px; height: 220px; }
.vl2 { left: 29px; top: 290px; height: 145px; }
.vs { display: flex; flex-direction: column; background: #d4d0c8; padding-left: 1px; }
.hs { display: flex; background: #d4d0c8; }
.sb {
  width: 19px; height: 19px; position: relative;
  background: #d4d0c8;
  border: 1px solid; border-color: #fff #444 #444 #fff;
}
.sb::after { content: ""; position: absolute; border-style: solid; border-color: transparent; }
.up::after { left: 4px; top: 5px; border-width: 0 5px 5px; border-bottom-color: #111; }
.down::after { left: 4px; top: 6px; border-width: 5px 5px 0; border-top-color: #111; }
.left::after { left: 5px; top: 4px; border-width: 5px 5px 5px 0; border-right-color: #111; }
.right::after { left: 6px; top: 4px; border-width: 5px 0 5px 5px; border-left-color: #111; }
.hatch { background: repeating-conic-gradient(#d4d0c8 0 25%, #fff 0 50%) 0 0/2px 2px; }
.hv { height: 20px; }
.thumb { flex: 1; background: #d4d0c8; border: 1px solid; border-color: #fff #777 #777 #fff; }
.hs .sb { margin-top: 1px; }
.hthumb { width: 44px; height: 19px; margin-top: 1px; background: #d4d0c8; border: 1px solid; border-color: #fff #777 #777 #fff; }
.hh { width: 88px; height: 19px; margin-top: 1px; }
.split { height: 13px; flex: none; position: relative; }
.split::before { content: ""; position: absolute; left: 0; right: 0; top: 6px; border-top: 1px solid #c4c4c4; }
.split i { position: absolute; left: 81px; top: 4px; width: 31px; height: 5px; background: #d6d6d6; border: 1px solid #aaa; }
.acc {
  height: 26px; flex: none;
  display: flex; align-items: center; justify-content: space-between;
  padding-left: 7px;
  background: linear-gradient(#fafafa, #f0f0f0 55%, #dadddd 58%, #c8cccc);
  border-bottom: 1px solid #8e9292;
  color: #00005c;
  font-size: 14.6px;
}
.acc span { padding-bottom: 4px; }
.chev { width: 26px; height: 25px; border-left: 1px solid #fff; position: relative; }
.chev::after {
  content: ""; position: absolute; left: 7px; top: 4px; width: 9px; height: 9px;
  border-right: 2.500px solid #6a6a6a; border-bottom: 2.500px solid #6a6a6a; transform: rotate(45deg);
}

.canvas { flex: 1; background: #000; position: relative; overflow: hidden; }
.scene { position: absolute; left: 0; top: 0; width: 1311px; height: 638px; display: block; }

.rbar { width: 39px; flex: none; background: linear-gradient(90deg, #dcdcdc, #e4e4e4); display: flex; flex-direction: column; align-items: flex-start; padding-left: 10px; }
.rg { width: 30px; height: 7px; flex: none; margin-top: 1px; background: radial-gradient(circle, #8c8c8c 1px, transparent 1.2px) 0 0/4px 4px; }
.rb { width: 24px; height: 30.900px; display: flex; align-items: center; justify-content: center; flex: none; position: relative; }
.rb svg { width: 23px; height: 23px; }
.rf { left: -5px; }
.rf::after { content: ""; position: absolute; left: 28px; top: 14px; border-left: 3px solid transparent; border-right: 3px solid transparent; border-top: 4px solid #111; }
.ra { font: 700 24px/30px "Liberation Serif", serif; color: #111; }

.foot { height: 37px; flex: none; }
.fbar {
  height: 34px; display: flex; align-items: center;
  padding-top: 1px;
  background: linear-gradient(#d8d8d8, #d0d0d0);
  border-bottom: 1px solid #a8a8a8;
  white-space: nowrap;
}
.fs { margin-left: 3px; }
.rbox { width: 24px; height: 24px; padding: 1px; border: 1px solid #c01818; flex: none; }
.rbox svg { width: 20px; height: 20px; display: block; }
.t { width: 31px; height: 26px; background: #fff; border: 1px solid #777; border-radius: 3px; display: flex; align-items: center; justify-content: center; }
.t svg { width: 22px; height: 22px; }
.p + .t { margin-left: 1px; }
.msg { font-size: 14.900px; margin-left: 7px; padding-bottom: 6px; }
.fst { height: 3px; background: #f2f2f2; display: flex; position: relative; }
.fst i { width: 1px; background: #999; margin-left: 742px; }
.fst i + i { margin-left: 150px; }
.fst .fo { width: 21px; margin-left: 198px; background: #f06030; }

.over { position: absolute; left: 0; top: 0; width: 1593px; height: 829px; pointer-events: none; }
.wm1 { font: 700 40.500px "Liberation Sans", "Noto Sans CJK SC", sans-serif; fill: #fff; fill-opacity: .46; letter-spacing: 1px; }
.wm2 { font: 700 13px "Liberation Sans", sans-serif; fill: #fff; fill-opacity: .55; letter-spacing: 4.400px; }
.yi { font: 700 13px "Noto Sans CJK SC", sans-serif; fill: #fff; }
```
